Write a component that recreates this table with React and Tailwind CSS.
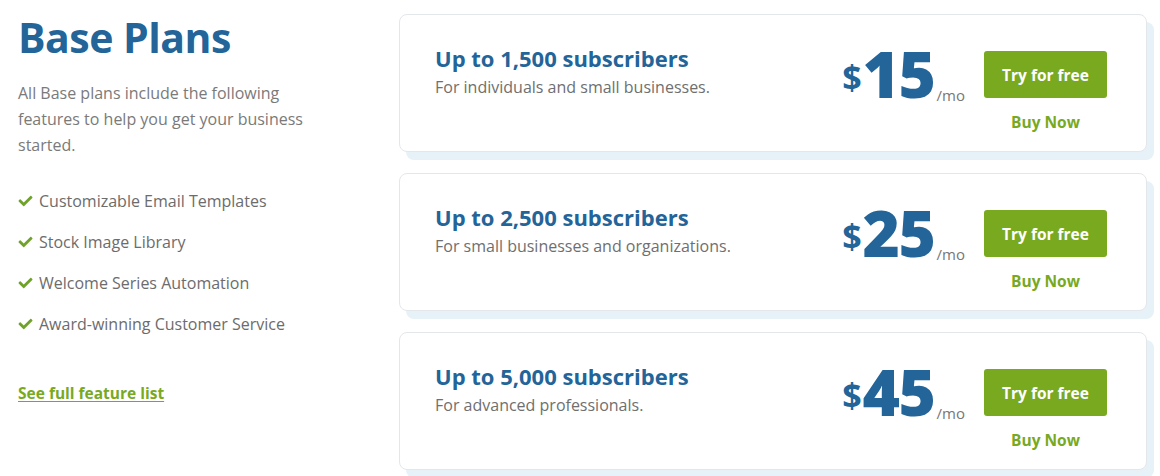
import React from 'react';
import { FaCheck } from 'react-icons/fa';

const features = [
  'Customizable Email Templates',
  'Stock Image Library',
  'Welcome Series Automation',
  'Award-winning Customer Service',
];

const plans = [
  { title: 'Up to 1,500 subscribers', desc: 'For individuals and small businesses.', price: '15' },
  { title: 'Up to 2,500 subscribers', desc: 'For small businesses and organizations.', price: '25' },
  { title: 'Up to 5,000 subscribers', desc: 'For advanced professionals.', price: '45' },
];

function PlanCard({ plan }) {
  return (
    <div className="h-[138px] rounded-lg border border-[#e4e7ea] bg-white shadow-[7px_8px_0_#e6f2f8] flex items-center pl-[35px] pr-[39px]">
      {/* title */}
      <div className="flex-1 -mt-[23px]">
        <h3 className="text-[22px] leading-[26px] font-bold text-[#236499]">{plan.title}</h3>
        <p className="text-[16px] leading-[22px] text-[#6f6f6f] mt-[5px]">{plan.desc}</p>
      </div>

      {/* price */}
      <div className="flex items-end text-[#236499] mr-[19px] -mt-[18px]">
        <span className="text-[34px] font-bold leading-none mb-[8px] mr-[1px]">$</span>
        <span className="text-[64px] font-extrabold leading-[56px] tracking-[-1.5px]">{plan.price}</span>
        <span className="text-[15px] text-[#777] mb-[-4px] ml-[2px]">/mo</span>
      </div>

      {/* actions */}
      <div className="flex flex-col items-center mt-[16px]">
        <button className="w-[123px] h-[47px] pt-[3px] rounded-[3px] bg-[#78a91f] text-white text-[15.5px] font-bold">
          Try for free
        </button>
        <a className="mt-[14px] text-[15.5px] font-bold text-[#78a91f] leading-[20px]">Buy Now</a>
      </div>
    </div>
  );
}

export default function App() {
  return (
    <div className="w-[1160px] h-[476px] bg-white flex overflow-hidden" style={{ fontFamily: '"Open Sans", sans-serif' }}>
      <div className="w-[399px] pl-[18px] pt-[11px]">
        <h1 className="text-[41px] leading-[52px] font-bold text-[#236499] tracking-[-0.5px]">Base Plans</h1>
        <p className="mt-[17px] w-[300px] text-[16px] leading-[26px] text-[#7a7a7a]">
          All Base plans include the following features to help you get your business started.
        </p>
        <ul className="mt-[32px] flex flex-col gap-[19px]">
          {features.map((f) => (
            <li key={f} className="flex items-center text-[16px] leading-[22px] text-[#6c6c6c]">
              <FaCheck className="text-[#6fa22a] w-[15px] h-[14px] mr-[6px]" />
              {f}
            </li>
          ))}
        </ul>
        <a className="block mt-[47px] text-[15.5px] font-bold text-[#78a91f] underline underline-offset-2">
          See full feature list
        </a>
      </div>

      <div className="w-[748px] pt-[14px] flex flex-col gap-[21px]">
        {plans.map((p) => (
          <PlanCard key={p.price} plan={p} />
        ))}
      </div>
    </div>
  );
}
